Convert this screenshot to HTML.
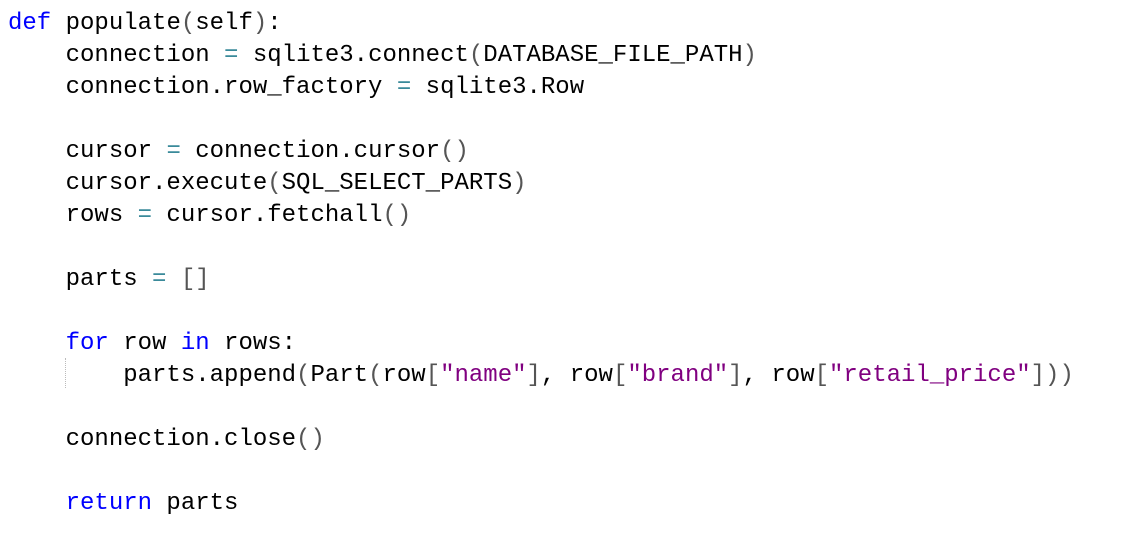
<!DOCTYPE html>
<html><head><meta charset="utf-8"><style>
html,body{margin:0;padding:0;background:#fff;width:1144px;height:546px;overflow:hidden}
pre{margin:0;padding:8px 0 0 8px;font-family:"Liberation Mono",monospace;font-size:24px;line-height:32px;color:#000;position:relative}
.k{color:#0000ff}.s{color:#800080}.o{color:#3a8a9a}.p{color:#555}
.g{position:absolute;left:65px;top:358px;height:30px;border-left:1px dotted #bbb}
</style></head><body><pre><span class="g"></span><span class="k">def</span> populate<span class="p">(</span>self<span class="p">)</span>:
    connection <span class="o">=</span> sqlite3.connect<span class="p">(</span>DATABASE_FILE_PATH<span class="p">)</span>
    connection.row_factory <span class="o">=</span> sqlite3.Row

    cursor <span class="o">=</span> connection.cursor<span class="p">()</span>
    cursor.execute<span class="p">(</span>SQL_SELECT_PARTS<span class="p">)</span>
    rows <span class="o">=</span> cursor.fetchall<span class="p">()</span>

    parts <span class="o">=</span> <span class="p">[]</span>

    <span class="k">for</span> row <span class="k">in</span> rows:
        parts.append<span class="p">(</span>Part<span class="p">(</span>row<span class="p">[</span><span class="s">"name"</span><span class="p">]</span>, row<span class="p">[</span><span class="s">"brand"</span><span class="p">]</span>, row<span class="p">[</span><span class="s">"retail_price"</span><span class="p">]))</span>

    connection.close<span class="p">()</span>

    <span class="k">return</span> parts
</pre></body></html>
